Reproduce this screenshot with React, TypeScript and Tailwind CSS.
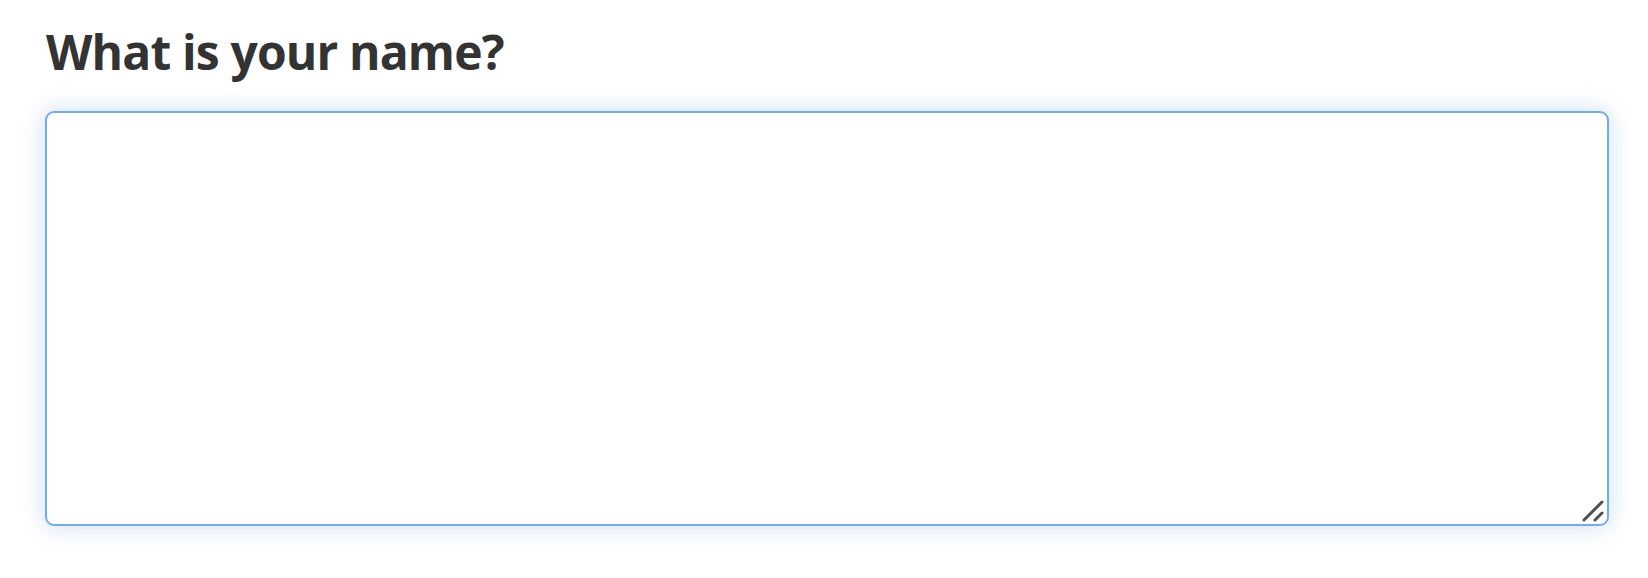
export default function App() {
  return (
    <div className="min-h-screen bg-white px-[45px] pt-[20px] font-['Open_Sans',sans-serif]">
      <label
        htmlFor="name"
        className="block pl-px text-[48px] font-bold leading-[64px] tracking-[-0.85px] text-[#333333]"
      >
        What is your name?
      </label>
      <div className="relative mt-[27px] w-[1564px]">
        <textarea
          id="name"
          className="block h-[415px] w-full resize-none rounded-[9px] border-[2.5px] border-[#74abea] bg-white shadow-[0_0_24px_rgba(90,150,225,0.32)] outline-none"
        />
        {/* resize grip */}
        <svg
          className="pointer-events-none absolute right-[5px] bottom-[4px]"
          width="22"
          height="22"
          viewBox="0 0 22 22"
        >
          <path d="M2 20L20 2" stroke="#505050" strokeWidth="3" strokeLinecap="round" />
          <path d="M13 20L20 13" stroke="#505050" strokeWidth="3" strokeLinecap="round" />
        </svg>
      </div>
    </div>
  )
}
